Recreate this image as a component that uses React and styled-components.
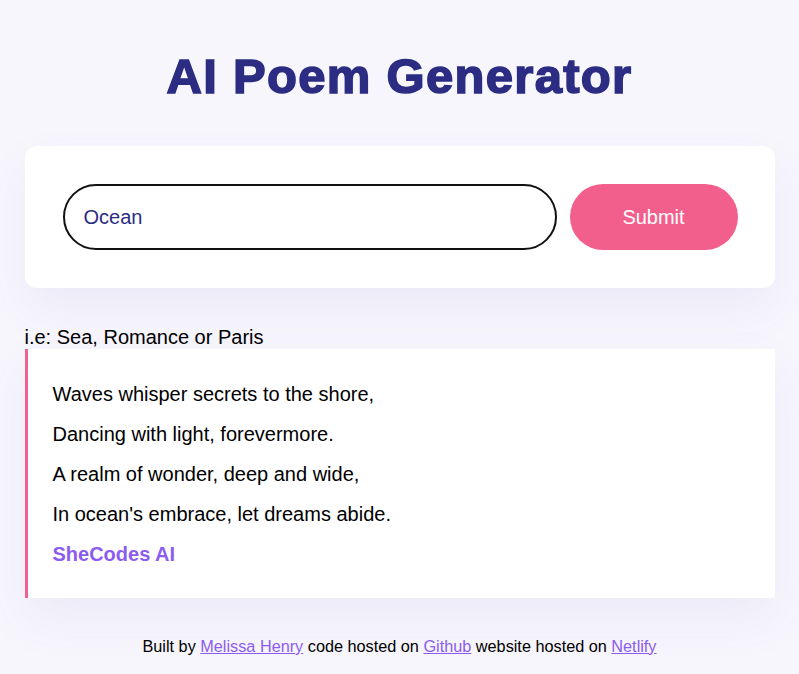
import React, { useState } from 'react';
import styled, { createGlobalStyle } from 'styled-components';

const GlobalStyle = createGlobalStyle`
  body {
    margin: 0;
    background: #f7f6fc;
    font-family: "Liberation Sans", Arial, sans-serif;
    color: #000;
  }
`;

const Container = styled.div`
  max-width: 750px;
  margin: 0 auto;
  padding-top: 46px;
`;

const Title = styled.h1`
  margin: 0 0 40px;
  text-align: center;
  font-size: 49px;
  font-weight: 700;
  letter-spacing: 1.3px;
  color: #2b2c82;
  -webkit-text-stroke: 1.6px #2b2c82;
  line-height: 60px;
`;

const FormCard = styled.form`
  display: flex;
  align-items: center;
  gap: 13px;
  background: #fff;
  border-radius: 12px;
  padding: 38px 37px 38px 38px;
  box-shadow: 0 20px 45px rgba(110, 90, 200, 0.08);
`;

const Input = styled.input`
  flex: 1;
  height: 66px;
  box-sizing: border-box;
  border: 2px solid #111;
  border-radius: 40px;
  padding: 0 19px;
  font-family: inherit;
  font-size: 20px;
  color: #2b2c82;
  outline: none;
`;

const Button = styled.button`
  width: 168px;
  height: 66px;
  border: none;
  border-radius: 40px;
  background: #f25f8c;
  color: #fff;
  font-family: inherit;
  font-size: 20px;
  cursor: pointer;
`;

const Hint = styled.div`
  margin-top: 38px;
  font-size: 20px;
  line-height: 23px;
`;

const Poem = styled.div`
  background: #fff;
  border-left: 3px solid #ec6390;
  padding: 25px 25px 24px;
  box-shadow: 0 20px 45px rgba(110, 90, 200, 0.08);
`;

const Line = styled.p`
  margin: 0;
  font-size: 20px;
  line-height: 40px;
`;

const Signature = styled(Line)`
  font-weight: 700;
  color: #8c5cf0;
`;

const Footer = styled.footer`
  margin-top: 38px;
  text-align: center;
  font-size: 16.25px;
  line-height: 20px;
  padding-bottom: 20px;
`;

const Link = styled.a`
  color: #8c5cf0;
  text-decoration: underline;
`;

const poem = [
  'Waves whisper secrets to the shore,',
  'Dancing with light, forevermore.',
  'A realm of wonder, deep and wide,',
  "In ocean's embrace, let dreams abide.",
];

export default function App() {
  const [topic, setTopic] = useState('Ocean');
  return (
    <>
      <GlobalStyle />
      <Container>
        <Title>AI Poem Generator</Title>
        <FormCard onSubmit={(e) => e.preventDefault()}>
          <Input value={topic} onChange={(e) => setTopic(e.target.value)} />
          <Button type="submit">Submit</Button>
        </FormCard>
        <Hint>i.e: Sea, Romance or Paris</Hint>
        <Poem>
          {poem.map((l) => (
            <Line key={l}>{l}</Line>
          ))}
          <Signature>SheCodes AI</Signature>
        </Poem>
        <Footer>
          Built by <Link href="#">Melissa Henry</Link> code hosted on{' '}
          <Link href="#">Github</Link> website hosted on <Link href="#">Netlify</Link>
        </Footer>
      </Container>
    </>
  );
}
